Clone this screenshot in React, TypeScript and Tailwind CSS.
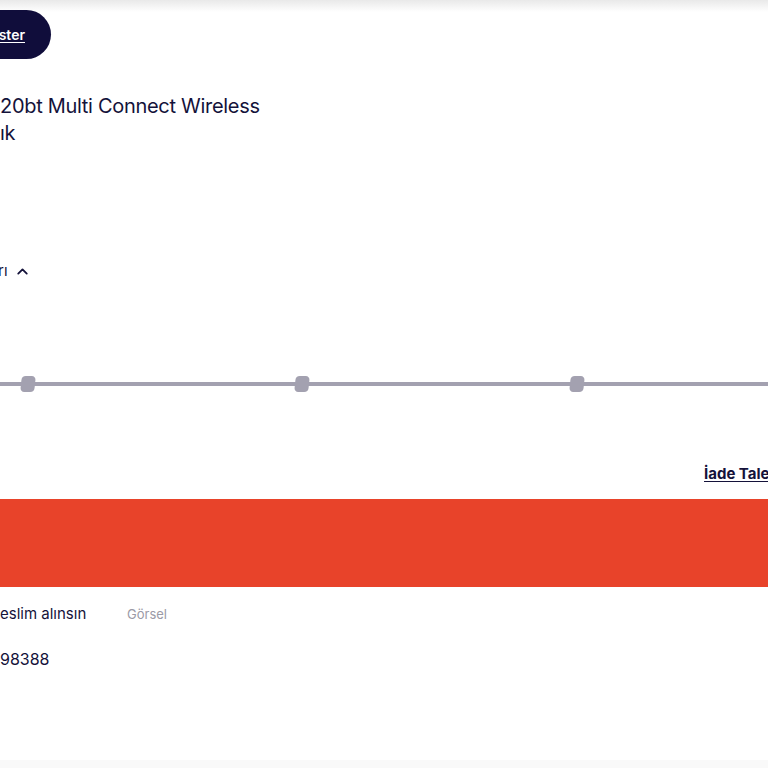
import { ChevronUp } from 'lucide-react';

const steps = [28, 302, 577];

export default function App() {
  return (
    <div className="relative w-[768px] h-[768px] overflow-hidden bg-white text-[#14123a]" style={{ fontFamily: 'Inter, "Noto Sans", sans-serif' }}>
      {/* top shade */}
      <div className="absolute inset-x-0 top-0 h-[12px] bg-gradient-to-b from-[#e9e9e9] to-white" />

      <div className="relative flex flex-col">
        {/* button */}
        <div className="mt-[10px] h-[49px] w-[51px] rounded-r-full bg-[#100d3b] flex items-center justify-end pr-[26px]">
          <span className="text-white text-[14px] font-semibold underline underline-offset-2">ster</span>
        </div>

        {/* title */}
        <div className="mt-[34px] text-[20px] leading-[27px] tracking-[-0.3px]">
          <div>20bt Multi Connect Wireless</div>
          <div>ık</div>
        </div>

        {/* details toggle */}
        <div className="mt-[113px] flex items-center gap-[6px] text-[15px] -ml-[2px]">
          <span>rı</span>
          <ChevronUp className="w-[17px] h-[17px]" strokeWidth={2.6} />
        </div>

        {/* progress */}
        <div className="relative mt-[93px] h-[16px]">
          <div className="absolute inset-x-0 top-[6px] h-[4px] bg-[#a3a1b0]" />
          {steps.map((x) => (
            <div
              key={x}
              className="absolute top-0 w-[14px] h-[16px] rounded-[4px] bg-[#a3a1b0] -skew-x-6"
              style={{ left: x - 7 }}
            />
          ))}
        </div>

        {/* return link */}
        <div className="mt-[69px] pl-[704px] h-[22px] whitespace-nowrap">
          <span className="text-[15px] font-bold underline underline-offset-2">İade Talebi</span>
        </div>

        {/* red bar */}
        <div className="mt-[16px] h-[88px] bg-[#e8432a]" />

        {/* info */}
        <div className="mt-[16px] flex items-baseline text-[15px]">
          <span className="w-[127px]">eslim alınsın</span>
          <span className="text-[13px] text-[#9b9aa6]">Görsel</span>
        </div>
        <div className="mt-[22px] text-[16px]">98388</div>
      </div>

      <div className="absolute inset-x-0 top-[760px] h-[8px] bg-[#f9f9f9]" />
    </div>
  );
}
